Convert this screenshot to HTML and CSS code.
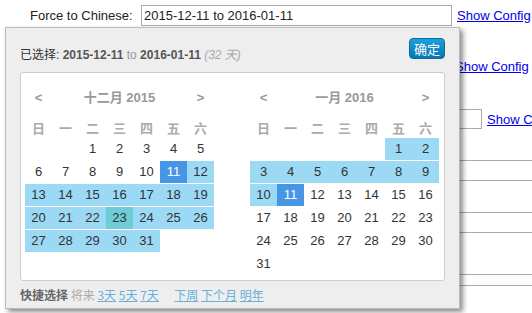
FILE: index.html
```html
<!DOCTYPE html>
<html lang="zh-CN">
<head>
    <meta charset="UTF-8">
    <meta name="viewport" content="width=device-width, initial-scale=1.0">
    <title>Date Range Picker</title>
    <link rel="stylesheet" href="styles.css">
</head>
<body>
    <div class="page">
        <div class="field-row">
            <label for="range" class="field-label">Force to Chinese:</label>
            <input type="text" id="range" class="range-input" value="2015-12-11 to 2016-01-11">
            <a href="#" class="config-link">Show Config</a>
        </div>
        <div class="second-row">
            <a href="#" class="config-link">Show Config</a>
        </div>
        <div class="third-row">
            <input type="text" class="small-input">
            <a href="#" class="config-link">Show Config</a>
        </div>
        <div class="table-lines">
            <div class="line l1"></div>
            <div class="line l2"></div>
            <div class="line l3"></div>
            <div class="line l4"></div>
            <div class="line l5"></div>
            <div class="line l6"></div>
        </div>
    </div>

    <div class="picker">
        <div class="picker-top">
            <div class="selected-info">
                已选择: <b>2015-12-11</b> <span class="to">to</span> <b>2016-01-11</b> <i class="day-count">(32 天)</i>
            </div>
            <button type="button" class="apply-btn">确定</button>
        </div>

        <div class="calendar-box">
            <div class="month" id="month-left"></div>
            <div class="month" id="month-right"></div>
        </div>

        <div class="shortcuts">
            <b>快捷选择</b>
            <span class="muted">将来</span>
            <a href="#">3天</a>
            <a href="#">5天</a>
            <a href="#">7天</a>
            <span class="spacer"></span>
            <a href="#">下周</a>
            <a href="#">下个月</a>
            <a href="#">明年</a>
        </div>
    </div>

    <script>
        const WEEK = ['日', '一', '二', '三', '四', '五', '六'];

        // Build one month grid: blanks before day 1, then the days
        function buildMonth(el, title, blanks, total, cellClass) {
            let html = '<div class="month-title">'
                + '<span class="nav">&lt;</span>'
                + '<span class="title-text">' + title + '</span>'
                + '<span class="nav">&gt;</span></div>';

            html += '<div class="week">';
            WEEK.forEach(d => { html += '<span>' + d + '</span>'; });
            html += '</div>';

            html += '<div class="days">';
            for (let i = 0; i < 42; i++) {
                const day = i - blanks + 1;
                if (day < 1 || day > total) {
                    html += '<span class="day"></span>';
                } else {
                    html += '<span class="day ' + cellClass(day) + '">' + day + '</span>';
                }
            }
            html += '</div>';
            el.innerHTML = html;
        }

        buildMonth(document.getElementById('month-left'), '十二月 2015', 2, 31, function(day) {
            if (day === 11) return 'edge';
            if (day === 23) return 'today';
            if (day > 11) return 'in-range';
            return '';
        });

        buildMonth(document.getElementById('month-right'), '一月 2016', 5, 31, function(day) {
            if (day === 11) return 'edge';
            if (day < 11) return 'in-range';
            return '';
        });
    </script>
</body>
</html>
```

FILE: styles.css
```css
body {
    margin: 0;
    font-family: "Liberation Sans", Arial, "Noto Sans CJK SC", sans-serif;
    font-size: 13px;
    color: #222;
    background-color: white;
    overflow: hidden;
}
.page {
    position: relative;
}
.field-row {
    display: flex;
    align-items: center;
    padding: 5px 0 0 30px;
}
.field-label {
    width: 111px;
}
.range-input {
    width: 311px;
    height: 21px;
    box-sizing: border-box;
    border: 1px solid #aaa;
    padding: 0 2px;
    font-family: inherit;
    font-size: 13px;
    color: #222;
}
.config-link {
    color: #0000ee;
    text-decoration: underline;
    margin-left: 5px;
    white-space: nowrap;
}
.second-row {
    margin-top: 33px;
    padding-left: 450px;
    line-height: 15px;
}
.third-row {
    display: flex;
    align-items: center;
    margin-top: 35px;
    padding-left: 440px;
}
.small-input {
    width: 42px;
    height: 20px;
    box-sizing: border-box;
    border: 1px solid #aaa;
}
.table-lines {
    margin-left: 440px;
}
.line {
    border-top: 1px solid #aaa;
}
.l1 { margin-top: 31px; height: 19px; }
.l2 { height: 31px; }
.l3 { height: 19px; }
.l4 { height: 41px; }
.l5 { height: 10px; }

/* date picker popup */
.picker {
    position: absolute;
    left: 5px;
    top: 27px;
    width: 455px;
    box-sizing: border-box;
    background-color: #eee;
    border: 1px solid #bbb;
    padding: 10px 14px 0;
    box-shadow: 3px 3px 5px rgba(0,0,0,0.45);
}
.picker-top {
    display: flex;
    justify-content: space-between;
    align-items: flex-start;
    height: 21px;
    margin-bottom: 13px;
}
.selected-info {
    font-size: 12px;
    color: #333;
    padding-top: 7px;
    white-space: nowrap;
}
.selected-info b {
    color: #555;
}
.selected-info .to {
    color: #999;
}
.selected-info .day-count {
    color: #aaa;
}
.apply-btn {
    height: 21px;
    padding: 0 4px;
    border: 1px solid #0a6c9f;
    border-radius: 4px;
    background: linear-gradient(#1aa1dc, #0777b3);
    color: white;
    font-family: "Noto Sans CJK SC", sans-serif;
    font-size: 13px;
    line-height: 18px;
    cursor: pointer;
}
.calendar-box {
    display: flex;
    gap: 36px;
    background-color: white;
    border: 1px solid #ccc;
    border-radius: 3px;
    padding: 9px 5px 5px 4px;
}
.month {
    width: 189px;
}
.month-title {
    display: grid;
    grid-template-columns: 27px 1fr 27px;
    height: 30px;
    line-height: 31px;
    text-align: center;
    color: #999;
    font-weight: bold;
}
.week {
    display: grid;
    grid-template-columns: repeat(7, 27px);
    margin-top: 5px;
    height: 21px;
    line-height: 21px;
    text-align: center;
    color: #aaa;
    font-weight: bold;
    font-family: "Noto Sans CJK SC", sans-serif;
    font-size: 13px;
}
.days {
    display: grid;
    grid-template-columns: repeat(7, 27px);
    grid-auto-rows: 22px;
    row-gap: 1px;
}
.day {
    line-height: 22px;
    text-align: center;
    color: #333;
}
.day.in-range {
    background-color: #9bd9f5;
}
.day.edge {
    background-color: #4696e6;
    color: white;
}
.day.today {
    background-color: #6fcbd5;
}
.shortcuts {
    height: 27px;
    line-height: 27px;
    font-size: 12px;
    color: #aaa;
    font-family: "Noto Sans CJK SC", sans-serif;
}
.shortcuts b {
    color: #666;
}
.shortcuts a {
    color: #6aaed9;
    text-decoration: underline;
}
.shortcuts .spacer {
    display: inline-block;
    width: 10px;
}
```
